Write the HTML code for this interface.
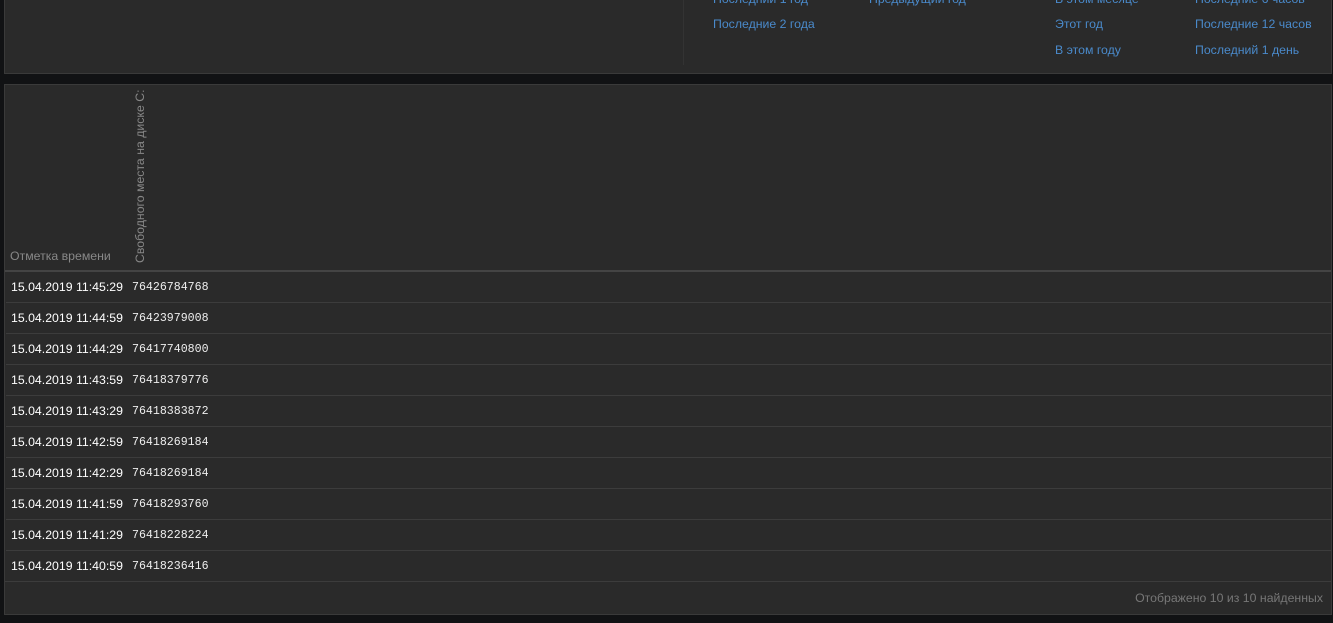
<!DOCTYPE html>
<html><head><meta charset="utf-8"><style>
*{margin:0;padding:0;box-sizing:border-box}
body{width:1333px;height:623px;background:#111214;font-family:"Liberation Sans",sans-serif;font-size:12.3px;position:relative;overflow:hidden}
.p{position:absolute;background:#2a2a2a;border:1px solid #3a3a3a}
a{position:absolute;color:#4a8acb;text-decoration:none;white-space:nowrap;font-size:12.3px}
.row{position:absolute;left:1px;width:1326px;height:31px;border-top:1px solid #3c3c3c}
.t{position:absolute;left:5px;top:8px;color:#fff;font-size:12.3px}
.n{position:absolute;left:126px;top:9px;color:#eee;font-family:"Liberation Mono",monospace;font-size:11.6px}
</style></head><body>
<div class="p" style="left:4px;top:-2px;width:1328px;height:76px">
<div style="position:absolute;left:678px;top:0;width:1px;height:66px;background:#333"></div>
</div>
<a style="left:713px;top:-8px">Последний 1 год</a>
<a style="left:869px;top:-8px">Предыдущий год</a>
<a style="left:1055px;top:-8px">В этом месяце</a>
<a style="left:1195px;top:-8px">Последние 6 часов</a>
<a style="left:713px;top:17px">Последние 2 года</a>
<a style="left:1055px;top:17px">Этот год</a>
<a style="left:1195px;top:17px">Последние 12 часов</a>
<a style="left:1055px;top:43px">В этом году</a>
<a style="left:1195px;top:43px">Последний 1 день</a>

<div class="p" style="left:4px;top:84px;width:1328px;height:531px">
<div style="position:absolute;left:5px;top:164px;color:#888">Отметка времени</div>
<div style="position:absolute;left:128px;top:178px;width:180px;transform:rotate(-90deg);transform-origin:0 0;color:#888;white-space:nowrap">Свободного места на диске C:</div>
<div style="position:absolute;left:0;top:185px;width:1326px;height:2px;background:#444"></div>
<div class="row" style="top:187px;border-top:none"><span class="t">15.04.2019 11:45:29</span><span class="n">76426784768</span></div>
<div class="row" style="top:217px"><span class="t">15.04.2019 11:44:59</span><span class="n">76423979008</span></div>
<div class="row" style="top:248px"><span class="t">15.04.2019 11:44:29</span><span class="n">76417740800</span></div>
<div class="row" style="top:279px"><span class="t">15.04.2019 11:43:59</span><span class="n">76418379776</span></div>
<div class="row" style="top:310px"><span class="t">15.04.2019 11:43:29</span><span class="n">76418383872</span></div>
<div class="row" style="top:341px"><span class="t">15.04.2019 11:42:59</span><span class="n">76418269184</span></div>
<div class="row" style="top:372px"><span class="t">15.04.2019 11:42:29</span><span class="n">76418269184</span></div>
<div class="row" style="top:403px"><span class="t">15.04.2019 11:41:59</span><span class="n">76418293760</span></div>
<div class="row" style="top:434px"><span class="t">15.04.2019 11:41:29</span><span class="n">76418228224</span></div>
<div class="row" style="top:465px"><span class="t">15.04.2019 11:40:59</span><span class="n">76418236416</span></div>
<div style="position:absolute;left:0;top:496px;width:1326px;height:1px;background:#3c3c3c"></div>
<div style="position:absolute;right:8px;top:506px;color:#777">Отображено 10 из 10 найденных</div>
</div>
</body></html>
